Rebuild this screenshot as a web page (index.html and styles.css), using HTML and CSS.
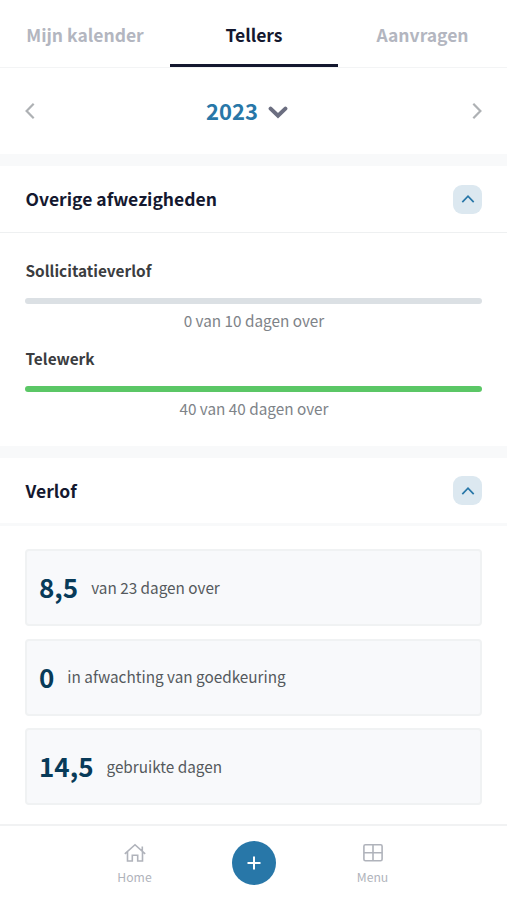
FILE: index.html
```html
<!DOCTYPE html>
<html lang="nl">
<head>
<meta charset="utf-8">
<title>Tellers</title>
<link rel="stylesheet" href="styles.css">
</head>
<body>
<div class="app">
  <nav class="tabs">
    <a class="tab">Mijn kalender</a>
    <a class="tab active">Tellers</a>
    <a class="tab">Aanvragen</a>
  </nav>
  <div class="year-row">
    <svg class="arrow" viewBox="0 0 10 18"><path d="M8.7 1.8 1.6 9l7.1 7.2"/></svg>
    <div class="year"><span>2023</span><svg class="down" viewBox="0 0 20 13"><path d="M2.600 2.600 10 9.800l7.400-7.200"/></svg></div>
    <svg class="arrow" viewBox="0 0 10 18"><path d="M1.300 1.800 8.400 9l-7.100 7.200"/></svg>
  </div>
  <section class="panel">
    <header class="panel-head">
      <h2>Overige afwezigheden</h2>
      <button class="toggle" aria-label="Inklappen"><svg viewBox="0 0 14 10"><path d="M1.300 8.200 7 2.200l5.700 6"/></svg></button>
    </header>
    <div class="counters">
      <div class="counter">
        <h3>Sollicitatieverlof</h3>
        <div class="bar"></div>
        <p>0 van 10 dagen over</p>
      </div>
      <div class="counter">
        <h3>Telewerk</h3>
        <div class="bar full"></div>
        <p>40 van 40 dagen over</p>
      </div>
    </div>
  </section>
  <section class="panel leave">
    <header class="panel-head">
      <h2>Verlof</h2>
      <button class="toggle" aria-label="Inklappen"><svg viewBox="0 0 14 10"><path d="M1.300 8.200 7 2.200l5.700 6"/></svg></button>
    </header>
    <div class="cards">
      <div class="card"><strong>8,5</strong><span>van 23 dagen over</span></div>
      <div class="card"><strong>0</strong><span>in afwachting van goedkeuring</span></div>
      <div class="card"><strong>14,5</strong><span>gebruikte dagen</span></div>
    </div>
  </section>
  <nav class="bottom">
    <a class="item">
      <svg viewBox="0 0 22 20"><path d="M.8 10.800 11 1.700l10.200 9.100M3.500 9v9h4.800v-5.800h5.400V18h4.800V9M18.300 3.500v4.300"/></svg>
      <span>Home</span>
    </a>
    <button class="add" aria-label="Toevoegen"><svg viewBox="0 0 14 14"><path d="M7 .5v13M.5 7h13"/></svg></button>
    <a class="item">
      <svg viewBox="0 0 22 20"><rect x="1.900" y="1.800" width="18.200" height="16" rx="1.500"/><path d="M11 1.800v16M1.900 9.800h18.200"/></svg>
      <span>Menu</span>
    </a>
  </nav>
</div>
</body>
</html>
```
FILE: styles.css
```css
* { box-sizing: border-box; }
body {
  margin: 0;
  background: #fff;
  font-family: "Noto Sans CJK SC", "Noto Sans", sans-serif;
}
h2, h3, p { margin: 0; }
button { border: 0; padding: 0; }
svg { display: block; fill: none; stroke: currentColor; }
.app { height: 900px; display: flex; flex-direction: column; overflow: hidden; }

.tabs {
  height: 68px;
  flex: none;
  display: grid;
  grid-template-columns: 170px 168px 169px;
  border-bottom: 1px solid #f3f4f5;
}
.tab {
  height: 67px;
  line-height: 69px;
  text-align: center;
  font-size: 17.500px;
  font-weight: 700;
  color: #b3b6c0;
  white-space: nowrap;
}
.tab.active { color: #14182f; border-bottom: 3px solid #14182f; }

.year-row {
  height: 86px;
  flex: none;
  display: flex;
  align-items: center;
  justify-content: space-between;
  padding: 0 25px;
}
.arrow { width: 10px; height: 18px; color: #aeb1b4; stroke-width: 2.200; }
.year {
  display: flex;
  align-items: center;
  gap: 10px;
  padding-right: 13px;
  font-size: 22px;
  line-height: 30px;
  font-weight: 700;
  color: #2877a8;
}
.year span { margin-top: -2px; }
.down { width: 20px; height: 13px; margin-top: 2px; color: #6b6e80; stroke-width: 4; stroke-linecap: round; }

.panel { flex: none; border-top: 12px solid #f8f9fa; }
.panel-head {
  height: 67px;
  display: flex;
  align-items: center;
  justify-content: space-between;
  padding: 0 25px;
  border-bottom: 1px solid #eef0f1;
}
.panel-head h2 { margin: -1px 0 0 .5px; font-size: 17.500px; line-height: 26px; font-weight: 700; color: #14182f; }
.toggle {
  width: 29px;
  height: 29px;
  border-radius: 9px;
  background: #dce8f0;
  color: #2877a8;
  display: grid;
  place-items: center;
}
.toggle svg { width: 14px; height: 10px; stroke-width: 1.700; }

.counters { height: 213px; padding: 25px 24.500px 0 25.500px; }
.counter { height: 88px; }
.counter h3 { font-size: 15.400px; line-height: 24px; font-weight: 700; color: #3b3d40; }
.bar { height: 6px; margin: 16px .5px 0 -.5px; border-radius: 3px; background: #dbe0e4; }
.bar.full { background: #5bc766; }
.counter p { margin-top: 5px; font-size: 15.300px; line-height: 23px; text-align: center; color: #7e8388; }

.leave .panel-head { height: 68px; border-bottom: 3px solid #f8f9fa; }
.leave .panel-head h2 { margin-top: 1px; }
.cards { display: grid; gap: 12.500px; padding: 23px 25px 0; }
.card {
  height: 77px;
  display: flex;
  align-items: center;
  gap: 13px;
  padding: 0 12px;
  border: 2px solid #f0f2f3;
  border-radius: 4px;
  background: #f8f9fb;
}
.card strong { margin-top: -1px; font-size: 26px; line-height: 38px; font-weight: 700; color: #083b59; }
.card span { margin-top: -2px; font-size: 15.300px; line-height: 24px; color: #55595d; }

.bottom {
  height: 76px;
  flex: none;
  margin-top: auto;
  display: flex;
  justify-content: center;
  align-items: flex-start;
  padding-top: 15px;
  border-top: 2px solid #f1f2f3;
}
.item {
  width: 194px;
  display: flex;
  flex-direction: column;
  align-items: center;
  color: #b0b3bb;
}
.item svg { width: 22px; height: 20px; margin-top: 2px; stroke-width: 1.600; }
.item span { margin-top: 4px; font-size: 12.200px; line-height: 20px; }
.add {
  width: 44px;
  height: 44px;
  border-radius: 50%;
  background: #2877a8;
  color: #fff;
  display: grid;
  place-items: center;
}
.add svg { width: 14px; height: 14px; stroke-width: 2; }
```
